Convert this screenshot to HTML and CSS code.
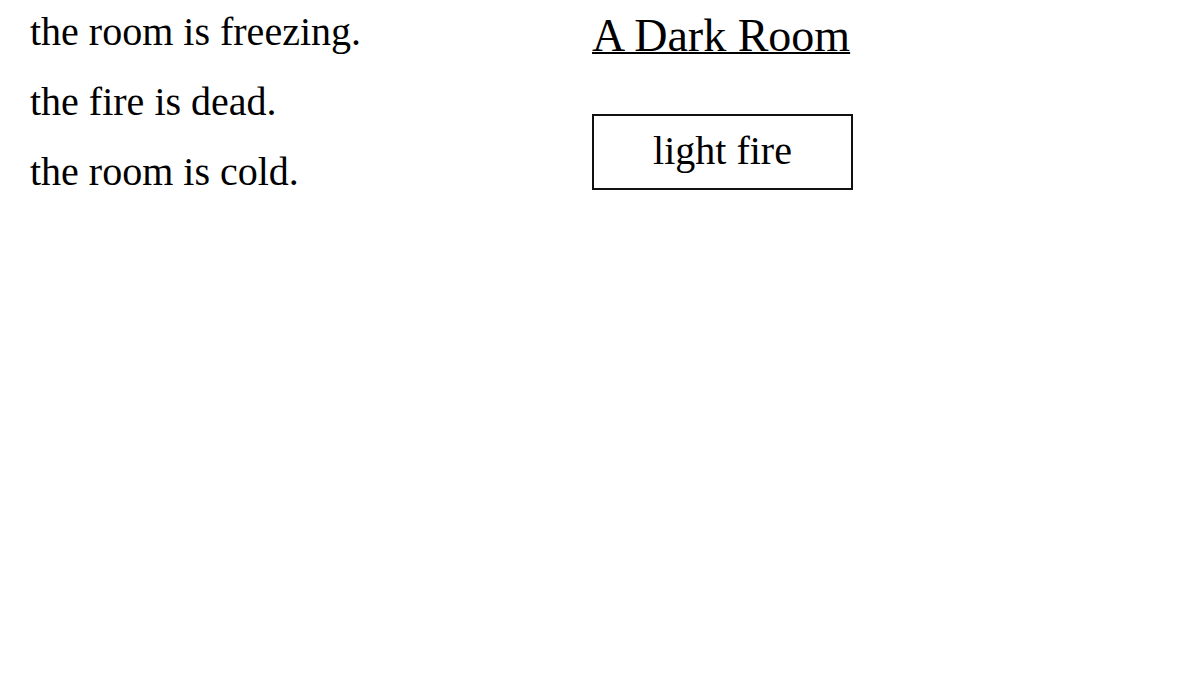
FILE: index.html
```html
<!DOCTYPE html>
<html>
<head>
<meta charset="utf-8">
<title>A Dark Room</title>
<link rel="stylesheet" href="styles.css">
</head>
<body>
<div class="wrap">
  <div class="notifications">
    <div class="note">the room is freezing.</div>
    <div class="note">the fire is dead.</div>
    <div class="note">the room is cold.</div>
  </div>
  <div class="main">
    <div class="header"><span class="title">A Dark Room</span></div>
    <div class="button">light fire</div>
  </div>
</div>
</body>
</html>
```
FILE: styles.css
```css
html, body {
  margin: 0;
  padding: 0;
  background: #fff;
}
body {
  font-family: "Liberation Serif", "Times New Roman", serif;
  color: #000;
}
.wrap {
  display: flex;
  padding-left: 30px;
}
.notifications {
  width: 562px;
  padding-top: 7px;
  display: flex;
  flex-direction: column;
  gap: 20px;
}
.note {
  font-size: 40px;
  line-height: 50px;
  white-space: nowrap;
}
.main {
  display: flex;
  flex-direction: column;
  align-items: flex-start;
}
.header {
  padding-top: 10px;
  font-size: 46px;
  line-height: 52px;
}
.title {
  text-decoration: underline;
  text-decoration-thickness: 2px;
}
.button {
  margin-top: 52px;
  box-sizing: border-box;
  width: 261px;
  height: 76px;
  border: 2px solid #111;
  font-size: 40px;
  line-height: 70px;
  text-align: center;
}
```
